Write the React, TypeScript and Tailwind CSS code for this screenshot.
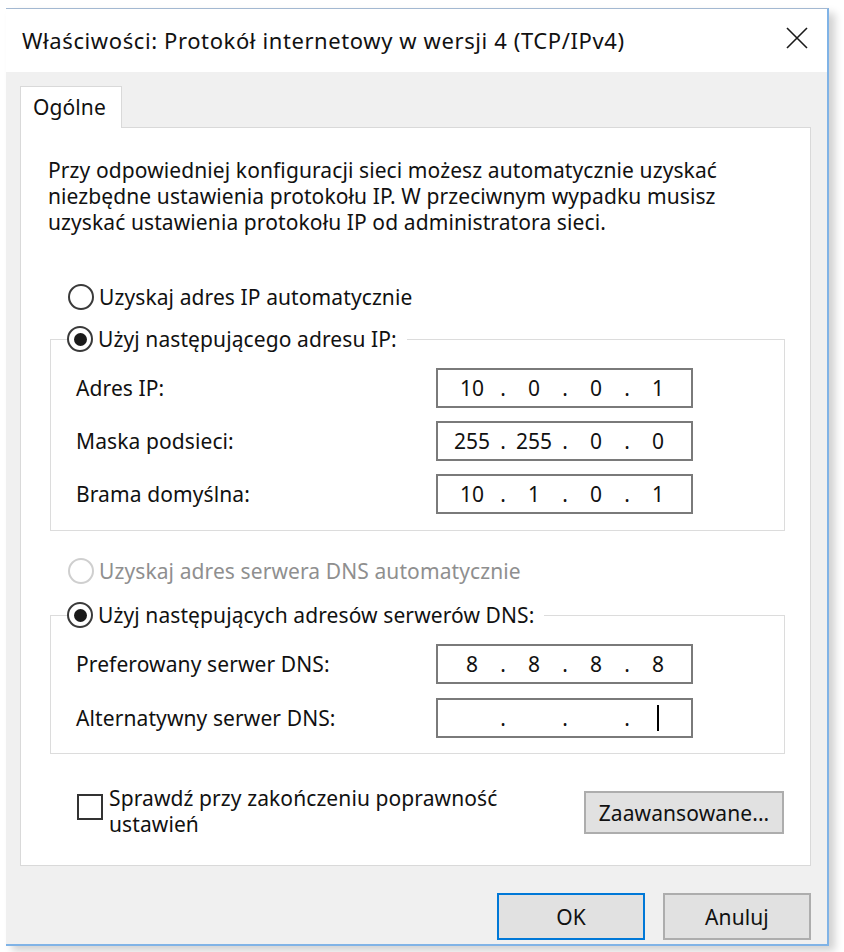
import { Fragment } from 'react';

const Radio = ({ checked, disabled }: { checked?: boolean; disabled?: boolean }) => (
  <span
    className={`flex h-[26px] w-[26px] shrink-0 items-center justify-center rounded-full border-2 bg-white ${
      disabled ? 'border-[#cfcfcf]' : 'border-[#3a3a3a]'
    }`}
  >
    {checked && <span className="h-[13px] w-[13px] rounded-full bg-[#1a1a1a]" />}
  </span>
);

const IpBox = ({ octets, caret }: { octets: string[]; caret?: boolean }) => (
  <div className="flex h-[40px] w-[257px] items-center border-2 border-[#7a7a7a] bg-white pl-[12px] tracking-normal">
    {octets.map((o, i) => (
      <Fragment key={i}>
        <span className="flex w-[44px] justify-center">
          {caret && i === 3 ? <span className="h-[26px] w-[2px] bg-black" /> : o}
        </span>
        {i < 3 && <span className="w-[18px] text-center">.</span>}
      </Fragment>
    ))}
  </div>
);

const Row = ({ label, octets, caret }: { label: string; octets: string[]; caret?: boolean }) => (
  <div className="flex items-center pl-[25px]">
    <span className="w-[360px]">{label}</span>
    <IpBox octets={octets} caret={caret} />
  </div>
);

const App = () => {
  return (
    <div className="h-[952px] w-[844px] bg-white pl-[6px] pt-[8px] font-['Noto_Sans',sans-serif] text-[21px] leading-[26px] tracking-[0.1px] text-[#111]">
      <div className="flex w-[823px] flex-col border-t border-r-2 border-b-2 border-t-[#a3b8d1] border-r-[#80b3e6] border-b-[#80b3e6] shadow-[6px_5px_8px_rgba(0,0,0,0.18)]">
        {/* Title bar */}
        <div className="flex h-[63px] items-center justify-between bg-white pl-[16px] pr-[19px]">
          <span className="pb-[2px] text-[22px] tracking-[0.6px]">
            Właściwości: Protokół internetowy w wersji 4 (TCP/IPv4)
          </span>
          <svg width="22" height="22" viewBox="0 0 22 22" className="mb-[6px]">
            <path d="M1 1 L21 21 M21 1 L1 21" stroke="#1a1a1a" strokeWidth="1.6" />
          </svg>
        </div>

        {/* Body */}
        <div className="flex h-[872px] flex-col bg-[#f0f0f0] pl-[14px] pr-[16px] pt-[14px]">
          <div className="relative z-10 -mb-px flex h-[42px] w-[102px] items-center border border-b-0 border-[#d9d9d9] bg-white pl-[12px] pb-[2px]">
            Ogólne
          </div>

          <div className="flex h-[739px] flex-col border border-[#d9d9d9] bg-white pt-[29px]">
            <p className="ml-[27px]">
              Przy odpowiedniej konfiguracji sieci możesz automatycznie uzyskać
              <br />
              niezbędne ustawienia protokołu IP. W przeciwnym wypadku musisz
              <br />
              uzyskać ustawienia protokołu IP od administratora sieci.
            </p>

            <div className="ml-[47px] mt-[49px] flex items-center gap-[5px]">
              <Radio />
              <span>Uzyskaj adres IP automatycznie</span>
            </div>

            <fieldset className="ml-[29px] mt-[16px] w-[735px] border border-[#dcdcdc] pb-[16px]">
              <legend className="ml-[16px] flex items-center gap-[5px] pr-[10px]">
                <Radio checked />
                <span>Użyj następującego adresu IP:</span>
              </legend>
              <div className="mt-[16px] flex flex-col gap-[13px]">
                <Row label="Adres IP:" octets={['10', '0', '0', '1']} />
                <Row label="Maska podsieci:" octets={['255', '255', '0', '0']} />
                <Row label="Brama domyślna:" octets={['10', '1', '0', '1']} />
              </div>
            </fieldset>

            <div className="ml-[47px] mt-[27px] flex items-center gap-[5px] text-[#8f8f8f]">
              <Radio disabled />
              <span>Uzyskaj adres serwera DNS automatycznie</span>
            </div>

            <fieldset className="ml-[29px] mt-[18px] w-[735px] border border-[#dcdcdc] pb-[15px]">
              <legend className="ml-[16px] flex items-center gap-[5px] pr-[10px]">
                <Radio checked />
                <span>Użyj następujących adresów serwerów DNS:</span>
              </legend>
              <div className="mt-[16px] flex flex-col gap-[14px]">
                <Row label="Preferowany serwer DNS:" octets={['8', '8', '8', '8']} />
                <Row label="Alternatywny serwer DNS:" octets={['', '', '', '']} caret />
              </div>
            </fieldset>

            <div className="mt-[31px] flex items-start pr-[26px]">
              <span className="ml-[56px] mt-[9px] h-[26px] w-[26px] shrink-0 border-2 border-[#333] bg-white" />
              <span className="ml-[6px]">
                Sprawdź przy zakończeniu poprawność
                <br />
                ustawień
              </span>
              <button className="ml-auto mt-[6px] flex h-[43px] w-[200px] items-center justify-center border-2 border-[#adadad] bg-[#e1e1e1]">
                Zaawansowane...
              </button>
            </div>
          </div>

          <div className="mt-[27px] flex justify-end gap-[18px]">
            <button className="flex h-[47px] w-[148px] items-center justify-center border-2 border-[#0078d7] bg-[#e1e1e1]">
              OK
            </button>
            <button className="flex h-[47px] w-[148px] items-center justify-center border-2 border-[#adadad] bg-[#e1e1e1]">
              Anuluj
            </button>
          </div>
        </div>
      </div>
    </div>
  );
};

export default App;
